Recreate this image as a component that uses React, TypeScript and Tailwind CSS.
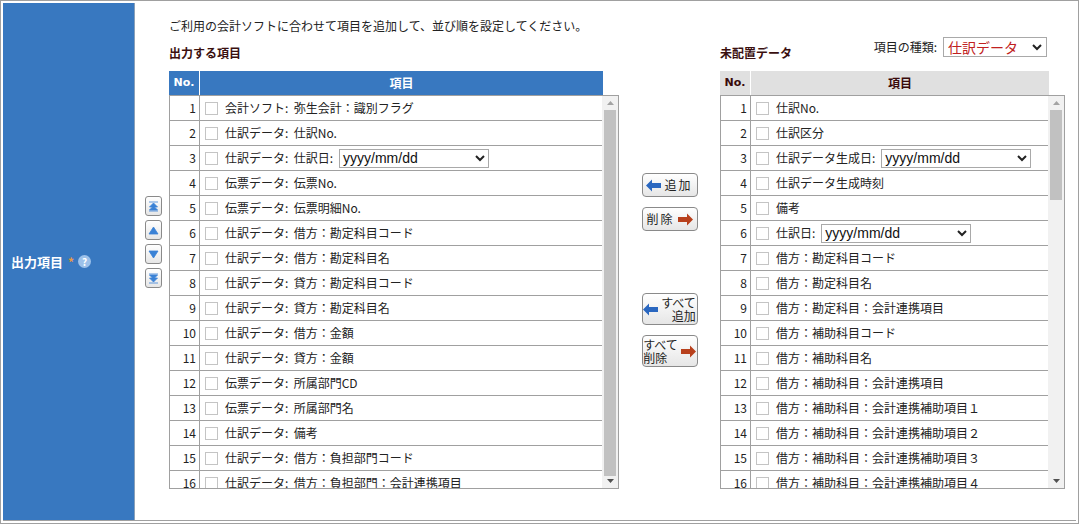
import React from "react";

const F = { fontFamily: '"Noto Sans CJK JP","Liberation Sans",sans-serif' };

const left: (string | [string, true])[] = [
  "会計ソフト:  弥生会計：識別フラグ",
  "仕訳データ:  仕訳No.",
  ["仕訳データ:  仕訳日:", true],
  "伝票データ:  伝票No.",
  "伝票データ:  伝票明細No.",
  "仕訳データ:  借方：勘定科目コード",
  "仕訳データ:  借方：勘定科目名",
  "仕訳データ:  貸方：勘定科目コード",
  "仕訳データ:  貸方：勘定科目名",
  "仕訳データ:  借方：金額",
  "仕訳データ:  貸方：金額",
  "伝票データ:  所属部門CD",
  "伝票データ:  所属部門名",
  "仕訳データ:  備考",
  "仕訳データ:  借方：負担部門コード",
  "仕訳データ:  借方：負担部門：会計連携項目",
  "仕訳データ:  貸方：負担部門コード",
  "仕訳データ:  貸方：負担部門：会計連携項目",
];
const right: (string | [string, true])[] = [
  "仕訳No.",
  "仕訳区分",
  ["仕訳データ生成日:", true],
  "仕訳データ生成時刻",
  "備考",
  ["仕訳日:", true],
  "借方：勘定科目コード",
  "借方：勘定科目名",
  "借方：勘定科目：会計連携項目",
  "借方：補助科目コード",
  "借方：補助科目名",
  "借方：補助科目：会計連携項目",
  "借方：補助科目：会計連携補助項目１",
  "借方：補助科目：会計連携補助項目２",
  "借方：補助科目：会計連携補助項目３",
  "借方：補助科目：会計連携補助項目４",
  "借方：補助科目：会計連携補助項目５",
];

function DateSel({ w }: { w: string }) {
  return (
    <div className={`ml-[6px] h-[19px] ${w} border border-[#a9a9a9] bg-white flex items-center justify-between px-[3px] text-[14px] text-[#111]`} style={{ fontFamily: '"Liberation Sans",sans-serif' }}>
      <span>yyyy/mm/dd</span>
      <svg width="10" height="7" viewBox="0 0 10 7"><path d="M1 1l4 4 4-4" stroke="#222" strokeWidth="2" fill="none" /></svg>
    </div>
  );
}

function Scrollbar({ thumbTop, thumbH }: { thumbTop: number; thumbH: number }) {
  return (
    <div className="w-[16px] shrink-0 bg-[#f1f1f1] flex flex-col items-center">
      <div className="h-[14px] flex items-center"><svg width="7" height="4"><path d="M0 4L3.5 0L7 4z" fill="#a3a3a3" /></svg></div>
      <div className="flex-1 w-full relative">
        <div className="absolute left-[2px] right-[2px] bg-[#c1c1c1]" style={{ top: thumbTop, height: thumbH }} />
      </div>
      <div className="h-[14px] flex items-center"><svg width="7" height="4"><path d="M0 0L3.5 4L7 0z" fill="#505050" /></svg></div>
    </div>
  );
}

function Table({ rows, w, blue, thumbTop, thumbH, selW }: { rows: (string | [string, true])[]; w: string; blue: boolean; thumbTop: number; thumbH: number; selW: string }) {
  return (
    <div className={w}>
      <div className={`flex h-[24px] ${blue ? "bg-[#3878c0] text-white" : "bg-[#e0e0e0] text-[#3a0a0a]"} font-bold text-[12px] mr-[16px]`}>
        <div className="w-[31px] border-r border-white flex items-center justify-center" style={{ fontFamily: '"DejaVu Sans",sans-serif', fontSize: 11 }}>No.</div>
        <div className="flex-1 flex items-center justify-center">項目</div>
      </div>
      <div className="flex border border-[#a0a0a0] h-[394px] overflow-hidden">
        <div className="flex-1 overflow-hidden">
          {rows.map((r, i) => {
            const label = typeof r === "string" ? r : r[0];
            const sel = typeof r !== "string";
            return (
              <div key={i} className="flex h-[25px] shrink-0 border-b border-[#a0a0a0] text-[12px] text-[#222]">
                <div className="w-[30px] border-r border-[#a0a0a0] flex items-center justify-end pr-[3px]">{i + 1}</div>
                <div className="flex-1 flex items-center pl-[5px] whitespace-pre">
                  <div className="w-[13px] h-[13px] border border-[#c4c4c4] bg-white mr-[7px]" />
                  <span>{label}</span>
                  {sel && <DateSel w={selW} />}
                </div>
              </div>
            );
          })}
        </div>
        <Scrollbar thumbTop={thumbTop} thumbH={thumbH} />
      </div>
    </div>
  );
}

function Btn({ children, h = "h-[24px]" }: { children: React.ReactNode; h?: string }) {
  return (
    <div className={`w-[56px] ${h} rounded-[4px] border border-[#8a8a8a] bg-gradient-to-b from-[#ffffff] to-[#e6e6e6] flex items-center justify-center gap-[3px] text-[12px] text-[#222] whitespace-nowrap`}>
      {children}
    </div>
  );
}

const LArrow = () => (
  <svg width="15" height="13" viewBox="0 0 15 13"><path d="M0 6.5L6 0.5V4H15V9H6V12.5Z" fill="#2a67c0" /></svg>
);
const RArrow = () => (
  <svg width="15" height="13" viewBox="0 0 15 13"><path d="M15 6.5L9 0.5V4H0V9H9V12.5Z" fill="#b8401c" /></svg>
);

function Mover({ d }: { d: string }) {
  return (
    <div className="w-[17px] h-[20px] rounded-[3px] border border-[#8a8a8a] bg-gradient-to-b from-white to-[#e6e6e6] flex items-center justify-center">
      <svg width="11" height="11" viewBox="0 0 11 11"><path d={d} fill="#3a82d6" stroke="#3a82d6" strokeWidth="0.8" /></svg>
    </div>
  );
}

export default function App() {
  return (
    <div className="w-[1079px] h-[524px] bg-white p-[2px] border border-[#a0a0a0]" style={F}>
      <div className="flex h-full border-b border-[#a0a0a0]">
        <div className="w-[132px] bg-[#3878c0] border-r border-[#8aa0b8] flex items-center pl-[8px] text-white font-bold text-[13px]">
          出力項目
          <span className="text-[#e89a40] ml-[5px] text-[12px]">*</span>
          <span className="ml-[4px] w-[13px] h-[13px] rounded-full bg-[#9cc1ea] text-white text-[10px] flex items-center justify-center">?</span>
        </div>
        <div className="flex-1 flex">
          <div className="w-[34px] flex flex-col items-center pt-[193px] gap-[4px] pl-[2px]">
            <Mover d="M1 1H10M5.5 2L1.5 6H9.5ZM5.5 5L1.5 9H9.5ZM1 10H10" />
            <Mover d="M5.5 2L1 9H10Z" />
            <Mover d="M5.5 9L1 2H10Z" />
            <Mover d="M1 1H10M5.5 6L1.5 2H9.5ZM5.5 9L1.5 5H9.5ZM1 10H10" />
          </div>
          <div className="flex-1 pt-[14px]">
            <div className="text-[12px] text-[#222] h-[16px]">ご利用の会計ソフトに合わせて項目を追加して、並び順を設定してください。</div>
            <div className="flex mt-[7px]">
              <div>
                <div className="h-[31px] text-[12px] font-bold text-[#3a1010] pt-[4px]">出力する項目</div>
                <Table rows={left} w="w-[450px]" blue thumbTop={0} thumbH={366} selW="w-[150px]" />
              </div>
              <div className="w-[101px] flex flex-col items-center pt-[133px] gap-[10px]">
                <Btn><LArrow /><span className="tracking-[2px]">追加</span></Btn>
                <Btn><span className="tracking-[2px]">削除</span><RArrow /></Btn>
                <div className="h-[42px]" />
                <Btn h="h-[32px]"><LArrow /><span className="leading-[13px] text-right">すべて<br />追加</span></Btn>
                <Btn h="h-[32px]"><span className="leading-[13px]">すべて<br />削除</span><RArrow /></Btn>
              </div>
              <div>
                <div className="h-[31px] flex items-start justify-between text-[12px] text-[#222]">
                  <span className="font-bold text-[#3a1010] pt-[4px]">未配置データ</span>
                  <div className="flex items-center mr-[18px] -mt-[3px]">
                    <span>項目の種類:</span>
                    <div className="ml-[6px] w-[104px] h-[20px] border border-[#a9a9a9] flex items-center justify-between px-[4px] text-[14px] text-[#c02020]">
                      <span>仕訳データ</span>
                      <svg width="10" height="7" viewBox="0 0 10 7"><path d="M1 1l4 4 4-4" stroke="#222" strokeWidth="2" fill="none" /></svg>
                    </div>
                  </div>
                </div>
                <Table rows={right} w="w-[345px]" blue={false} thumbTop={0} thumbH={90} selW="w-[150px]" />
              </div>
            </div>
          </div>
        </div>
      </div>
    </div>
  );
}
